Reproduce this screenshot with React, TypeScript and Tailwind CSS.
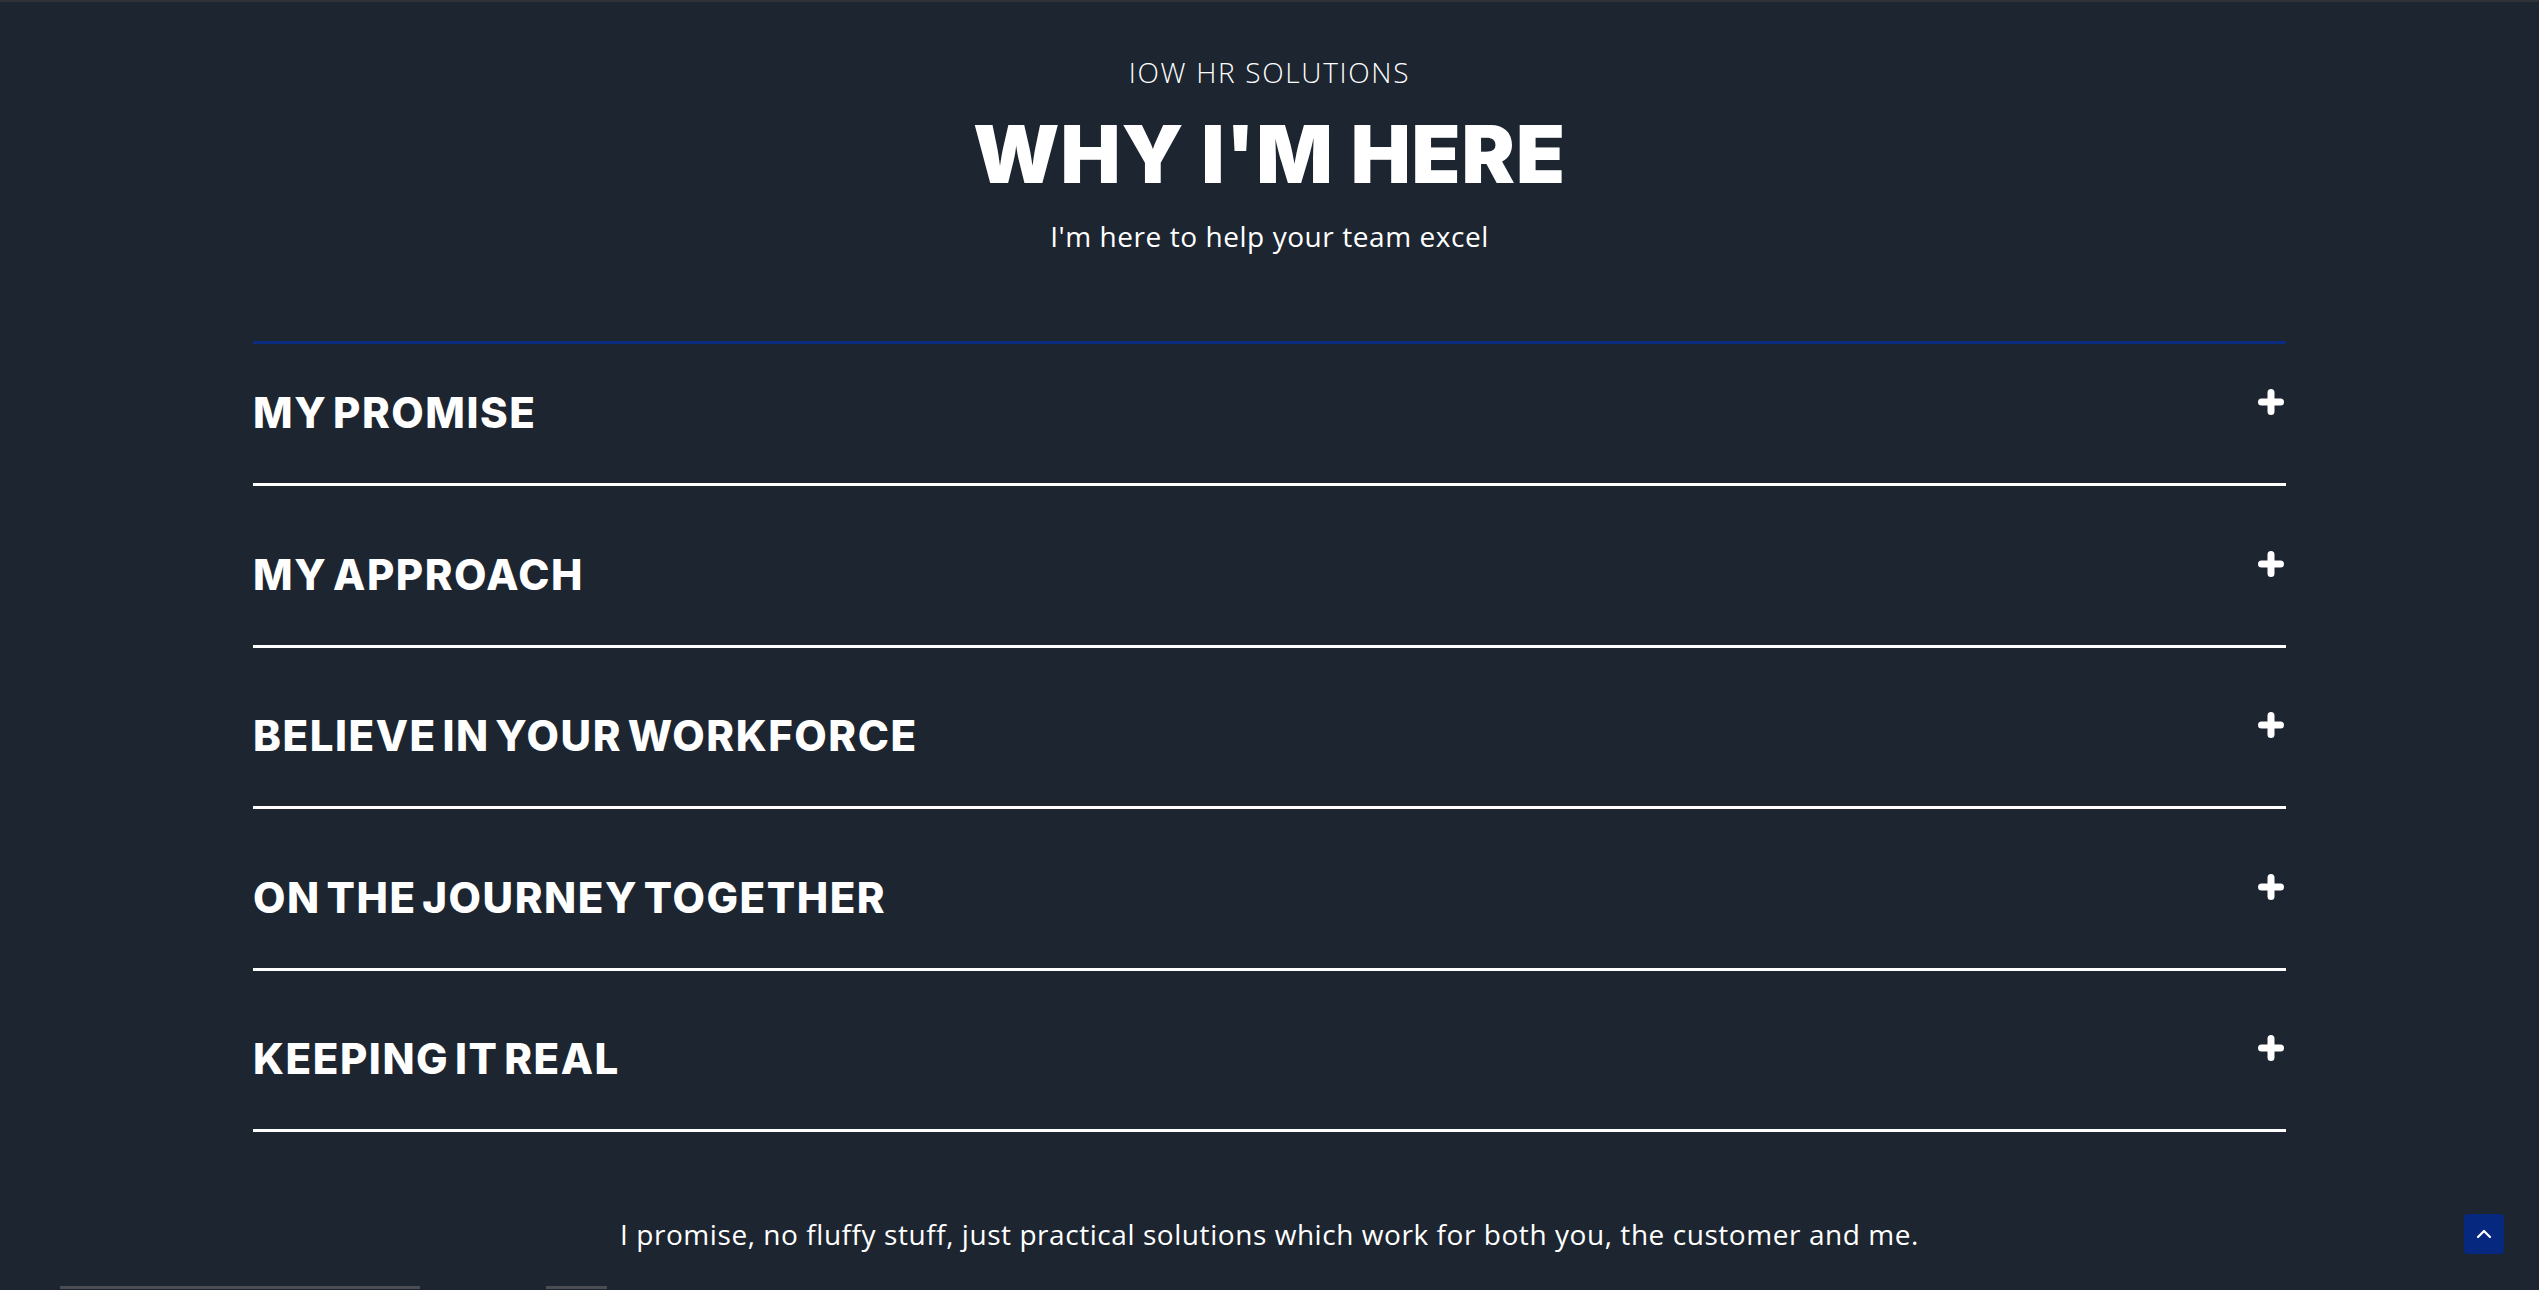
import { useState } from 'react';

const ITEMS = [
  'MY PROMISE',
  'MY APPROACH',
  'BELIEVE IN YOUR WORKFORCE',
  'ON THE JOURNEY TOGETHER',
  'KEEPING IT REAL',
];

function PlusIcon() {
  return (
    <svg width="26" height="26" viewBox="0 0 26 26" className="shrink-0 -mt-[3px] mr-[2px]">
      <path d="M13 3.5v19M3.5 13h19" stroke="#ffffff" strokeWidth="7" strokeLinecap="round" />
    </svg>
  );
}

function AccordionItem({ title, first }: { title: string; first?: boolean }) {
  const [open, setOpen] = useState(false);
  return (
    <div className="border-b-[3px] border-white">
      <button
        type="button"
        onClick={() => setOpen(!open)}
        className={`w-full flex items-start justify-between text-left pb-[49px] ${first ? 'pt-[48px]' : 'pt-[67.5px]'}`}
      >
        <span className="text-white text-[42px] leading-none font-extrabold tracking-[0.037em] [word-spacing:-0.12em] font-['Inter',sans-serif]">
          {title}
        </span>
        <PlusIcon />
      </button>
    </div>
  );
}

export default function App() {
  return (
    <div className="relative h-[1290px] overflow-hidden bg-[#1c2530] border-t-2 border-[#2e3238] font-['Open_Sans',sans-serif] text-white">
      <header className="flex flex-col items-center text-center">
        <p className="mt-[56px] text-[28px] leading-none font-light tracking-[0.06em]">IOW HR SOLUTIONS</p>
        <h2 className="mt-[28px] text-[80px] leading-none font-black tracking-[0.012em] font-['Inter',sans-serif]">
          WHY I'M HERE
        </h2>
        <p className="mt-[28px] text-[28px] leading-none tracking-[0.02em]">I'm here to help your team excel</p>
      </header>

      <section className="mx-auto w-[2033px] mt-[91px] border-t-[3px] border-[#0b2c80]">
        {ITEMS.map((t, i) => (
          <AccordionItem key={t} title={t} first={i === 0} />
        ))}
      </section>

      <p className="mt-[88px] text-center text-[28px] leading-none tracking-[0.02em]">
        I promise, no fluffy stuff, just practical solutions which work for both you, the customer and me.
      </p>

      <div className="flex mt-[38px] pl-[60px] gap-[126px]">
        <div className="w-[360px] h-[3px] bg-[#4a4d52]" />
        <div className="w-[61px] h-[3px] bg-[#4a4d52]" />
      </div>

      <button
        type="button"
        className="absolute right-[35px] top-[1212px] w-[40px] h-[40px] rounded-[4px] bg-[#06287f] flex items-center justify-center"
      >
        <svg width="16" height="10" viewBox="0 0 16 10">
          <path d="M2 8l6-6 6 6" stroke="#ffffff" strokeWidth="2.2" fill="none" strokeLinecap="round" strokeLinejoin="round" />
        </svg>
      </button>
    </div>
  );
}
